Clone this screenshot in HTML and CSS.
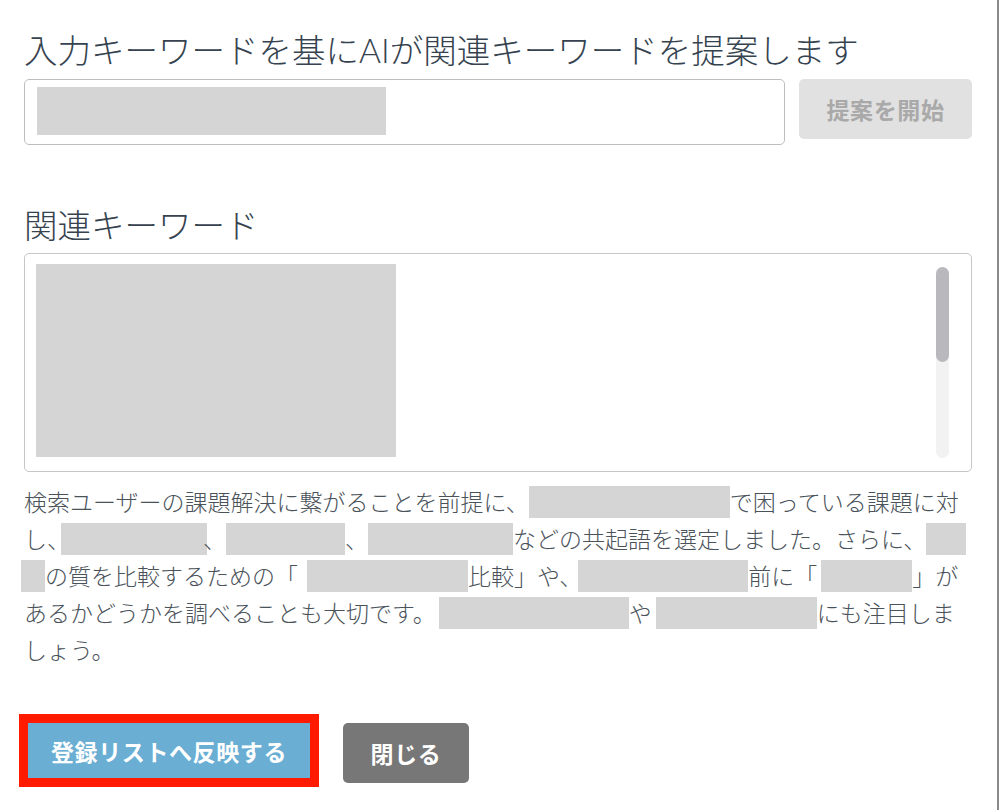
FILE: index.html
```html
<!DOCTYPE html>
<html lang="ja">

<head>
    <meta charset="UTF-8">
    <title>関連キーワード提案</title>
    <link rel="stylesheet" href="styles.css">
</head>

<body>
    <div class="modal">
        <!-- 入力エリア -->
        <h2 class="title">入力キーワードを基にAIが関連キーワードを提案します</h2>
        <div class="search_row">
            <div class="keyword_input">
                <span class="mask input_mask"></span>
            </div>
            <button class="btn btn_suggest" disabled>提案を開始</button>
        </div>

        <!-- 結果エリア -->
        <h2 class="title title_result">関連キーワード</h2>
        <div class="result_box">
            <span class="mask result_mask"></span>
            <div class="scroll_track">
                <div class="scroll_thumb"></div>
            </div>
        </div>

        <p class="comment">検索ユーザーの課題解決に繋がることを前提に、<span class="mask" style="width: 201px"></span>で困っている課題に対<br>し、<span class="mask narrow tuck" style="width: 146px"></span>、<span class="mask" style="width: 119px"></span>、<span class="mask" style="width: 145px"></span>などの共起語を選定しました。さらに、<span class="mask" style="width: 40px"></span><br><span class="mask pull" style="width: 24px"></span>の質を比較するための「<span class="mask" style="width: 161px; margin-left: 9px"></span>比較」や、<span class="mask" style="width: 170px; margin-left: -4px"></span>前に「<span class="mask" style="width: 91px; margin-left: 4px"></span>」が<br>あるかどうかを調べることも大切です。<span class="mask" style="width: 190px; margin-left: 3px"></span>や<span class="mask" style="width: 161px; margin-left: 4px"></span>にも注目しま<br>しょう。</p>

        <!-- ボタン -->
        <div class="actions">
            <button class="btn btn_apply">登録リストへ反映する</button>
            <button class="btn btn_close">閉じる</button>
        </div>
    </div>
</body>

</html>
```

FILE: styles.css
```css
* {
    padding: 0;
    margin: 0;
    box-sizing: border-box;
}

body {
    background: #ffffff;
    font-family: Lato, "Noto Sans CJK JP", sans-serif;
}

.modal {
    width: 999px;
    height: 810px;
    padding: 25px 25px 0 24px;
    border-right: 2px solid #8a8a8a;
    overflow: hidden;
}

.title {
    font-size: 33.5px;
    font-weight: 300;
    line-height: 50px;
    color: #36434f;
    white-space: nowrap;
}

.title_result {
    margin-top: 55px;
}

.search_row {
    display: flex;
    align-items: flex-start;
    gap: 14px;
    margin-top: 4px;
}

.keyword_input {
    width: 761px;
    height: 66px;
    padding: 7px 12px;
    border: 1px solid #bdbdbd;
    border-radius: 5px;
}

.mask {
    display: inline-block;
    height: 32px;
    background: #d5d5d5;
    vertical-align: top;
    margin-top: 2px;
}

.input_mask {
    width: 349px;
    height: 48px;
    margin-top: 0;
}

.btn {
    border: none;
    border-radius: 5px;
    font-family: Lato, "Noto Sans CJK JP", sans-serif;
    font-size: 23px;
    font-weight: 700;
    letter-spacing: 0.6px;
    color: #ffffff;
}

.btn_suggest {
    width: 173px;
    height: 60px;
    background: #e1e1e1;
    color: #a9a9a9;
}

.result_box {
    display: flex;
    justify-content: space-between;
    align-items: flex-start;
    height: 219px;
    margin-top: 3px;
    padding: 10px 22px 0 11px;
    border: 1px solid #c6c6c6;
    border-radius: 5px;
}

.result_mask {
    width: 360px;
    height: 193px;
    margin-top: 0;
}

.scroll_track {
    width: 13px;
    height: 191px;
    margin-top: 3px;
    background: #f2f2f2;
    border-radius: 7px;
}

.scroll_thumb {
    height: 95px;
    background: #b9b9bd;
    border-radius: 7px;
}

.comment {
    margin-top: 12px;
    font-size: 23px;
    font-weight: 300;
    line-height: 37px;
    color: #4a525a;
    white-space: nowrap;
}

.comment .narrow {
    margin-right: -4px;
}

.comment .tuck {
    margin-left: -9px;
}

.comment .pull {
    margin-left: -3px;
}

.actions {
    display: flex;
    align-items: flex-start;
    gap: 33px;
    margin-top: 54px;
    padding-left: 4px;
}

.btn_apply {
    width: 282px;
    height: 55px;
    background: #6aaed3;
    border-radius: 0;
    outline: 9px solid #ff1a00;
}

.btn_close {
    width: 126px;
    height: 60px;
    background: #777777;
}
```
